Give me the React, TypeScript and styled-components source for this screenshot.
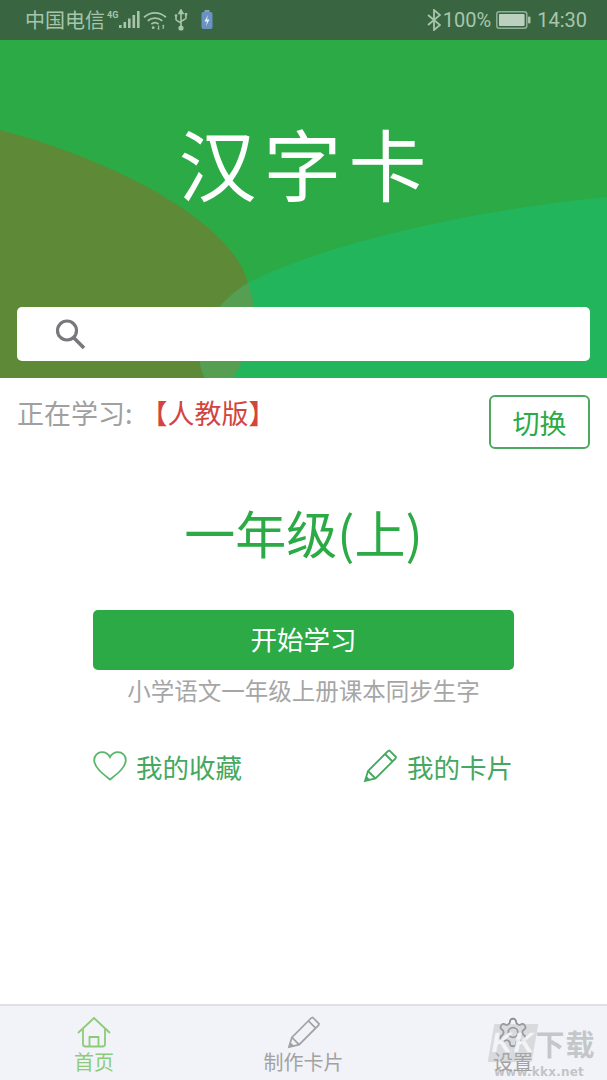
import React from 'react';
import styled, { createGlobalStyle } from 'styled-components';

const CJK = `"Noto Sans CJK SC", "Noto Sans", sans-serif`;
const GREEN = '#2baa45';

const Global = createGlobalStyle`
  html, body { margin: 0; padding: 0; background: #fff; }
  body { font-family: ${CJK}; }
`;
const Page = styled.div`
  position: relative;
  width: 607px;
  height: 1080px;
  display: flex;
  flex-direction: column;
  overflow: hidden;
  background: #fff;
`;
const StatusBar = styled.div`
  height: 40px;
  flex: none;
  background: #396641;
  color: #a8c5ac;
  display: flex;
  align-items: center;
  justify-content: space-between;
  padding: 0 20px 0 25px;
  font-size: 20px;
  line-height: 40px;
`;
const StatusGroup = styled.div`
  display: flex;
  align-items: center;
`;
const Latin = styled.span`
  font-family: Roboto, sans-serif;
  font-size: 20px;
`;
const Hero = styled.header`
  position: relative;
  height: 338px;
  flex: none;
  background: ${GREEN};
  display: flex;
  flex-direction: column;
  align-items: center;
  overflow: hidden;
`;
const HeroArt = styled.svg`
  position: absolute;
  inset: 0;
`;
const Title = styled.h1`
  position: relative;
  margin: 65px 0 0;
  height: 202px;
  font-size: 78px;
  line-height: 114px;
  letter-spacing: 7px;
  padding-left: 5px;
  font-weight: 400;
  color: #fff;
`;
const SearchBox = styled.div`
  position: relative;
  width: 573px;
  height: 54px;
  background: #fff;
  border-radius: 5px;
  display: flex;
  align-items: center;
  padding-left: 37px;
  box-sizing: border-box;
`;
const StudyRow = styled.div`
  display: flex;
  justify-content: space-between;
  align-items: flex-start;
  padding: 17px 17px 0;
`;
const Studying = styled.div`
  font-size: 27px;
  line-height: 38px;
  margin-top: -1px;
  color: #a0a0a0;
`;
const Edition = styled.span`
  color: #d2453e;
  margin-left: 8px;
`;
const SwitchButton = styled.button`
  width: 101px;
  height: 54px;
  padding: 0;
  background: #fff;
  border: 2px solid #4fa862;
  border-radius: 6px;
  color: ${GREEN};
  font-family: ${CJK};
  font-size: 27px;
`;
const Grade = styled.div`
  margin-top: 45px;
  text-align: center;
  color: ${GREEN};
  font-size: 51px;
  line-height: 76px;
`;
const StartButton = styled.button`
  display: block;
  margin: 40px auto 0;
  width: 421px;
  height: 60px;
  border: 0;
  border-radius: 5px;
  background: ${GREEN};
  color: #fff;
  font-family: ${CJK};
  font-size: 26.5px;
  line-height: 58px;
  padding: 0 0 2px;
`;
const Caption = styled.div`
  text-align: center;
  color: #a6a6a6;
  font-size: 23.5px;
  line-height: 34px;
  margin-top: 3px;
`;
const Links = styled.div`
  display: flex;
  justify-content: space-between;
  margin: 39px 94px 0 93px;
`;
const LinkItem = styled.div`
  display: flex;
  align-items: center;
  gap: 9px;
  height: 40px;
  color: #46a860;
  font-size: 26.5px;
`;
const Spacer = styled.div`
  flex: 1;
`;
const TabBar = styled.nav`
  height: 76px;
  flex: none;
  box-sizing: border-box;
  background: #f2f3f8;
  border-top: 2px solid #e0e0e4;
  display: flex;
  justify-content: space-between;
  padding: 0 55px;
`;
const Tab = styled.div<{ $active?: boolean }>`
  width: 78px;
  display: flex;
  flex-direction: column;
  align-items: center;
  padding-top: 10px;
  color: ${p => (p.$active ? '#8ccb78' : '#a2a2a2')};
  font-size: 20px;
  line-height: 28px;
  white-space: nowrap;
`;
const TabIcon = styled.svg`
  display: block;
  height: 33px;
  width: 36px;
  margin-bottom: -1px;
`;
const Watermark = styled.div`
  position: absolute;
  left: 491px;
  top: 1024px;
  width: 116px;
  height: 56px;
`;
const WatermarkMark = styled.div`
  display: flex;
  align-items: center;
  height: 38px;
  font-size: 29px;
  line-height: 38px;
  font-weight: 700;
  color: rgba(150, 156, 156, 0.5);
  white-space: nowrap;
`;
const WatermarkK = styled.span`
  display: inline-block;
  width: 22px;
  text-align: center;
  background: rgba(170, 175, 175, 0.36);
  color: rgba(248, 249, 252, 0.85);
  font-family: "Liberation Sans", sans-serif;
  font-size: 28px;
  transform: skewX(-10deg);
`;
const WatermarkHan = styled.span`
  display: inline-block;
  width: 30px;
  text-align: center;
  &:first-of-type { margin-left: 3px; }
`;
const WatermarkUrl = styled.div`
  margin: 3px 0 0 3px;
  font-family: "DejaVu Sans", sans-serif;
  font-weight: 700;
  font-size: 12px;
  line-height: 14px;
  letter-spacing: 0.2px;
  color: rgba(150, 155, 155, 0.55);
`;

const Signal = () => (
  <svg width="40" height="24" viewBox="0 0 40 24" style={{ marginLeft: -2 }}>
    <text x="4" y="10" fontSize="9" fontWeight="700" fontFamily="Roboto, sans-serif" fill="#a8c5ac">4G</text>
    <g fill="#a8c5ac">
      <rect x="16" y="17" width="2.6" height="3" />
      <rect x="20.5" y="14" width="2.6" height="6" />
      <rect x="25" y="10.5" width="2.6" height="9.5" />
      <rect x="29.5" y="7" width="2.6" height="13" />
      <rect x="34" y="3" width="2.6" height="17" />
    </g>
  </svg>
);
const Wifi = () => (
  <svg width="24" height="20" viewBox="0 0 26 22" fill="none" stroke="#a8c5ac" strokeWidth="2" style={{ marginLeft: 0 }}>
    <path d="M1 8c7-6.5 17-6.5 24 0" />
    <path d="M5 12c4.500-4 11.500-4 16 0" />
    <path d="M9 15.500c2.500-2 5.500-2 8 0" />
    <circle cx="11" cy="19.500" r="1.500" fill="#a8c5ac" stroke="none" />
    <path d="M17 17v4M16 20l1.500 1.500M22 21v-4M23 18l-1.500-1.500" strokeWidth="1.300" />
  </svg>
);
const Usb = () => (
  <svg width="14" height="22" viewBox="0 0 14 22" fill="none" stroke="#a8c5ac" strokeWidth="1.600" style={{ marginLeft: 7 }}>
    <path d="M7 4v15M2 7v3.500c0 1.500 5 2.500 5 4M12 6v3c0 1.500-5 2.500-5 4" />
    <path d="M5 4.500 7 1l2 3.500z" fill="#a8c5ac" />
    <circle cx="7" cy="19" r="1.800" fill="#a8c5ac" />
    <circle cx="2" cy="6.500" r="1.300" fill="#a8c5ac" stroke="none" />
    <rect x="10.800" y="4" width="2.400" height="2.400" fill="#a8c5ac" stroke="none" />
  </svg>
);
const ChargeBattery = () => (
  <svg width="12" height="22" viewBox="0 0 12 22" style={{ marginLeft: 13 }}>
    <rect x="3.500" y="1" width="5" height="3" fill="#8a9fae" />
    <rect x="0.500" y="3" width="11" height="17" rx="2" fill="#6a93c4" />
    <path d="M7 6 3.500 12.500H6L5 17l3.500-6.500H6z" fill="#e8f0f4" />
  </svg>
);
const Bluetooth = () => (
  <svg width="14" height="22" viewBox="0 0 14 22" fill="none" stroke="#a8c5ac" strokeWidth="1.800" style={{ marginRight: 2 }}>
    <path d="M1 6l12 10-6 5V1l6 5L1 16" />
  </svg>
);
const Battery = () => (
  <svg width="35" height="18" viewBox="0 0 35 18" style={{ margin: '0 6px 0 5px' }}>
    <rect x="0.800" y="0.800" width="30" height="16.400" rx="2.500" fill="none" stroke="#8fb096" strokeWidth="1.500" />
    <rect x="3" y="3" width="25.600" height="12" rx="1" fill="#bcd0bf" />
    <rect x="32" y="5.500" width="2.500" height="7" rx="1" fill="#a8c5ac" />
  </svg>
);
const SearchIcon = () => (
  <svg width="32" height="32" viewBox="0 0 32 32" fill="none" stroke="#77777c" strokeWidth="3.200">
    <circle cx="13" cy="12.500" r="9.500" />
    <path d="M20 20l10 10" strokeWidth="3.600" />
  </svg>
);
const Heart = () => (
  <svg width="34" height="30" viewBox="0 0 34 30" fill="none" stroke="#57b56c" strokeWidth="1.800">
    <path d="M17 28.500C10 23 1.200 16.500 1.200 9 1.200 4.500 4.800 1.200 9 1.200c3.500 0 6.500 2 8 5 1.500-3 4.500-5 8-5 4.200 0 7.800 3.300 7.800 7.800 0 7.500-8.800 14-15.800 19.500z" />
  </svg>
);
const PencilPath = () => (
  <>
    <path d="M2 32 5 22 25 2l1.500-.5 6.500 6.500-.5 1.500L12.500 29.500z" />
    <path d="M22 5l7.500 7.500M5 22l7.500 7.500" />
    <path d="M2 32l1.500-5 3.500 3.500z" fill="currentColor" stroke="none" />
  </>
);
const Pencil = () => (
  <svg width="35" height="34" viewBox="0 0 35 34" fill="none" stroke="#46a860" strokeWidth="1.800" color="#46a860">
    <PencilPath />
  </svg>
);

export default function App() {
  return (
    <Page>
      <Global />
      <StatusBar>
        <StatusGroup>
          <span>中国电信</span>
          <Signal />
          <Wifi />
          <Usb />
          <ChargeBattery />
        </StatusGroup>
        <StatusGroup>
          <Bluetooth />
          <Latin>100%</Latin>
          <Battery />
          <Latin>14:30</Latin>
        </StatusGroup>
      </StatusBar>
      <Hero>
        <HeroArt width="607" height="338" viewBox="0 0 607 338">
          <defs>
            <clipPath id="olive">
              <path d="M0 90C110 119 232 180 248 243C262 280 250 315 232 338H0Z" />
            </clipPath>
          </defs>
          <path d="M0 90C110 119 232 180 248 243C262 280 250 315 232 338H0Z" fill="#5e8a37" />
          <path d="M607 157C470 170 320 205 248 243C205 270 190 310 205 338H607Z" fill="#22b55c" />
          <path d="M607 157C470 170 320 205 248 243C205 270 190 310 205 338H607Z" fill="#569f52" clipPath="url(#olive)" />
        </HeroArt>
        <Title>汉字卡</Title>
        <SearchBox>
          <SearchIcon />
        </SearchBox>
      </Hero>
      <StudyRow>
        <Studying>
          正在学习:<Edition>【人教版】</Edition>
        </Studying>
        <SwitchButton>切换</SwitchButton>
      </StudyRow>
      <Grade>一年级(上)</Grade>
      <StartButton>开始学习</StartButton>
      <Caption>小学语文一年级上册课本同步生字</Caption>
      <Links>
        <LinkItem>
          <Heart />
          <span>我的收藏</span>
        </LinkItem>
        <LinkItem>
          <Pencil />
          <span>我的卡片</span>
        </LinkItem>
      </Links>
      <Spacer />
      <TabBar>
        <Tab $active>
          <TabIcon viewBox="0 0 36 33" fill="none" stroke="#8ccb78" strokeWidth="1.800">
            <path d="M2 17 18 2l16 15" />
            <path d="M7 13v15c0 1.500 1 2.500 2.500 2.500h17c1.500 0 2.500-1 2.500-2.500V13" />
            <path d="M13.500 30.500V21h9v9.500" />
          </TabIcon>
          <span>首页</span>
        </Tab>
        <Tab>
          <TabIcon viewBox="0 0 35 34" fill="none" stroke="#a3a3a6" strokeWidth="1.800" color="#a3a3a6">
            <PencilPath />
          </TabIcon>
          <span>制作卡片</span>
        </Tab>
        <Tab>
          <TabIcon viewBox="0 0 24 24" fill="none" stroke="#8f8f92" strokeWidth="1.300">
            <path d="M12.220 2h-.44a2 2 0 0 0-2 2v.18a2 2 0 0 1-1 1.730l-.43.250a2 2 0 0 1-2 0l-.15-.080a2 2 0 0 0-2.730.730l-.22.380a2 2 0 0 0 .730 2.730l.15.100a2 2 0 0 1 1 1.720v.510a2 2 0 0 1-1 1.740l-.15.090a2 2 0 0 0-.730 2.730l.22.380a2 2 0 0 0 2.730.730l.15-.080a2 2 0 0 1 2 0l.43.250a2 2 0 0 1 1 1.730V20a2 2 0 0 0 2 2h.44a2 2 0 0 0 2-2v-.18a2 2 0 0 1 1-1.730l.43-.250a2 2 0 0 1 2 0l.15.080a2 2 0 0 0 2.730-.730l.22-.390a2 2 0 0 0-.730-2.730l-.15-.080a2 2 0 0 1-1-1.740v-.500a2 2 0 0 1 1-1.740l.15-.090a2 2 0 0 0 .730-2.730l-.22-.380a2 2 0 0 0-2.730-.730l-.15.080a2 2 0 0 1-2 0l-.43-.250a2 2 0 0 1-1-1.730V4a2 2 0 0 0-2-2z" />
            <circle cx="12" cy="12" r="3.500" />
          </TabIcon>
          <span>设置</span>
        </Tab>
      </TabBar>
      <Watermark>
        <WatermarkMark>
          <WatermarkK>K</WatermarkK>
          <WatermarkK>K</WatermarkK>
          <WatermarkHan>下</WatermarkHan>
          <WatermarkHan>载</WatermarkHan>
        </WatermarkMark>
        <WatermarkUrl>www.kkx.net</WatermarkUrl>
      </Watermark>
    </Page>
  );
}
